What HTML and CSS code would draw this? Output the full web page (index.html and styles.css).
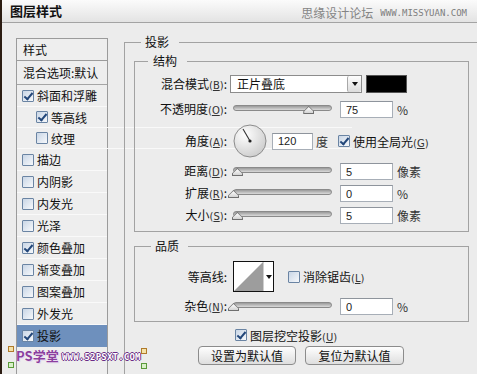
FILE: index.html
```html
<!DOCTYPE html>
<html lang="zh">
<head>
<meta charset="UTF-8">
<title>图层样式</title>
<link rel="stylesheet" href="styles.css">
</head>
<body>
<div class="titlebar">
  <span class="title">图层样式</span>
  <span class="site"><span class="site-cn">思缘设计论坛</span><span class="site-url">WWW.MISSYUAN.COM</span></span>
</div>

<div class="main">
  <div class="styles">
    <div class="styles-head">样式</div>
    <div class="styles-blend">混合选项:默认</div>
    <div class="item"><span class="cb on"></span>斜面和浮雕</div>
    <div class="item sub"><span class="cb on"></span>等高线</div>
    <div class="item sub"><span class="cb"></span>纹理</div>
    <div class="item"><span class="cb"></span>描边</div>
    <div class="item"><span class="cb"></span>内阴影</div>
    <div class="item"><span class="cb"></span>内发光</div>
    <div class="item"><span class="cb"></span>光泽</div>
    <div class="item"><span class="cb on"></span>颜色叠加</div>
    <div class="item"><span class="cb"></span>渐变叠加</div>
    <div class="item"><span class="cb"></span>图案叠加</div>
    <div class="item"><span class="cb"></span>外发光</div>
    <div class="item active"><span class="cb on"></span>投影</div>
  </div>

  <fieldset class="outer">
    <legend>投影</legend>

    <fieldset class="sub structure">
      <legend>结构</legend>
      <div class="row r-blend">
        <label class="lbl">混合模式<span class="key">(<u>B</u>)</span>:</label>
        <div class="select"><span class="select-text">正片叠底</span><span class="select-btn"></span></div>
        <span class="swatch"></span>
      </div>
      <div class="row r-opacity">
        <label class="lbl">不透明度<span class="key">(<u>O</u>)</span>:</label>
        <div class="slider"><span class="thumb" style="left:76%"></span></div>
        <input class="num" value="75">
        <span class="unit">%</span>
      </div>
      <div class="row r-angle">
        <label class="lbl">角度<span class="key">(<u>A</u>)</span>:</label>
        <svg class="dial" width="34" height="34" viewBox="0 0 34 34">
          <defs>
            <radialGradient id="dg" cx="35%" cy="30%" r="80%">
              <stop offset="0" stop-color="#ffffff"/>
              <stop offset="1" stop-color="#c9c9c9"/>
            </radialGradient>
          </defs>
          <circle cx="17" cy="17" r="16" fill="url(#dg)" stroke="#8c8c8c"/>
          <line x1="17" y1="17" x2="10" y2="5" stroke="#333" stroke-width="1.1"/>
          <circle cx="17" cy="17" r="1.6" fill="#222"/>
        </svg>
        <input class="num num-angle" value="120">
        <span class="unit unit-deg">度</span>
        <span class="cb on global"></span><span class="cb-text">使用全局光<span class="key">(<u>G</u>)</span></span>
      </div>
      <div class="row">
        <label class="lbl">距离<span class="key">(<u>D</u>)</span>:</label>
        <div class="slider"><span class="thumb" style="left:4%"></span></div>
        <input class="num" value="5">
        <span class="unit">像素</span>
      </div>
      <div class="row">
        <label class="lbl">扩展<span class="key">(<u>R</u>)</span>:</label>
        <div class="slider"><span class="thumb" style="left:0%"></span></div>
        <input class="num" value="0">
        <span class="unit">%</span>
      </div>
      <div class="row">
        <label class="lbl">大小<span class="key">(<u>S</u>)</span>:</label>
        <div class="slider"><span class="thumb" style="left:4%"></span></div>
        <input class="num" value="5">
        <span class="unit">像素</span>
      </div>
    </fieldset>

    <fieldset class="sub quality">
      <legend>品质</legend>
      <div class="row r-contour">
        <label class="lbl">等高线:</label>
        <div class="contour">
          <svg width="29" height="29" viewBox="0 0 29 29"><polygon points="0,29 29,0 29,29" fill="#9d9d9d"/></svg>
          <span class="contour-btn"></span>
        </div>
        <span class="cb aa"></span><span class="cb-text">消除锯齿<span class="key">(<u>L</u>)</span></span>
      </div>
      <div class="row r-noise">
        <label class="lbl">杂色<span class="key">(<u>N</u>)</span>:</label>
        <div class="slider"><span class="thumb" style="left:0%"></span></div>
        <input class="num" value="0">
        <span class="unit">%</span>
      </div>
    </fieldset>

    <div class="knockout"><span class="cb on"></span><span class="cb-text">图层挖空投影<span class="key">(<u>U</u>)</span></span></div>
    <div class="buttons">
      <button class="btn">设置为默认值</button>
      <button class="btn">复位为默认值</button>
    </div>
  </fieldset>
</div>

<div class="mark">
  <span class="corner c1"></span>
  <span class="corner c2"></span>
  <span class="mark-ps">PS学堂</span>
  <span class="mark-url">WWW.52PSXT.COM</span>
  <span class="corner c3"></span>
  <span class="corner c4"></span>
</div>
</body>
</html>
```

FILE: styles.css
```css
body {
  margin: 0;
  width: 477px;
  height: 374px;
  overflow: hidden;
  position: relative;
  box-sizing: border-box;
  border-left: 2px solid #2b1c12;
  background: #ececec;
  font-family: "Noto Sans CJK SC", sans-serif;
  font-size: 12px;
  color: #111;
}

/* title bar */
.titlebar {
  height: 22px;
  border-bottom: 1px solid #a3a3a3;
  background: linear-gradient(#fbfbfb, #e3e3e3);
  display: flex;
  align-items: center;
  justify-content: space-between;
  padding: 0 10px 0 8px;
}
.title {
  font-weight: bold;
  font-size: 13px;
  line-height: 16px;
}
.site {
  display: flex;
  align-items: center;
  margin-top: 3px;
  color: #858585;
}
.site-cn {
  font-size: 12px;
  line-height: 14px;
}
.site-url {
  font-family: "DejaVu Sans Mono", monospace;
  font-size: 9px;
  margin-left: 7px;
  color: #7d7d7d;
}

.main {
  display: flex;
  align-items: flex-start;
}

/* left style list */
.styles {
  flex: none;
  width: 92px;
  height: 336px;
  margin: 15px 0 0 14px;
  box-sizing: border-box;
  border: 1px solid #9b9b9b;
  border-bottom: none;
  background: #eeeeee;
}
.styles-head {
  height: 21px;
  line-height: 21px;
  padding-left: 6px;
  border-bottom: 1px solid #9b9b9b;
}
.styles-blend {
  height: 23px;
  line-height: 23px;
  padding-left: 6px;
  border-bottom: 1px solid #a5a5a5;
  white-space: nowrap;
}
.item {
  height: 21px;
  display: flex;
  align-items: center;
  padding-left: 5px;
  border-bottom: 1px solid #f9f9f9;
}
.item.sub {
  padding-left: 19px;
}
.item .cb {
  margin-right: 3px;
}
.item.active {
  background: #6e90bd;
  border-bottom-color: #6e90bd;
}

/* checkbox */
.cb {
  flex: none;
  width: 12px;
  height: 12px;
  box-sizing: border-box;
  border: 1px solid #6a84a3;
  border-radius: 1px;
  background: linear-gradient(135deg, #c9d6e6, #f6f8fb);
  position: relative;
}
.cb.on::after {
  content: "";
  position: absolute;
  left: 3px;
  top: 0px;
  width: 3px;
  height: 7px;
  border: solid #23477a;
  border-width: 0 2px 2px 0;
  transform: rotate(40deg);
}
.cb-text {
  margin-left: 3px;
  white-space: nowrap;
}

/* group boxes */
fieldset {
  margin: 0;
  border: 1px solid #a2a2a2;
  min-width: 0;
}
legend {
  line-height: 16px;
  font-size: 12px;
}
.outer {
  flex: none;
  width: 353px;
  height: 340px;
  margin: 11px 0 0 16px;
  padding: 0 0 0 9px;
  box-sizing: border-box;
  border-right: none;
  border-bottom: none;
}
.outer > legend {
  margin-left: 7px;
  padding: 0 10px 0 4px;
}
.sub {
  width: 335px;
  box-sizing: border-box;
  padding: 0;
}
.sub > legend {
  margin-left: 13px;
  padding: 0 10px 0 5px;
}
.structure {
  margin-top: 3px;
  padding-bottom: 7px;
}
.quality {
  margin-top: 6px;
  padding-bottom: 6px;
}
.quality > legend {
  margin-left: 16px;
  padding: 0 9px 0 4px;
}

/* rows */
.row {
  display: flex;
  align-items: center;
  height: 17px;
  margin-top: 5px;
}
.r-blend {
  height: 18px;
  margin-top: 6px;
}
.r-opacity {
  margin-top: 8px;
}
.r-angle {
  height: 34px;
  margin-top: 6px;
}
.r-contour {
  height: 31px;
  margin-top: 7px;
}
.r-noise {
  margin-top: 6px;
}
.lbl {
  flex: none;
  width: 92px;
  text-align: right;
  margin-right: 3px;
  white-space: nowrap;
  line-height: 17px;
}
.key {
  font-family: "DejaVu Sans", sans-serif;
  font-size: 10px;
  color: #333;
}
.key u {
  text-decoration-thickness: 1px;
}

/* controls */
.select {
  flex: none;
  width: 132px;
  height: 18px;
  box-sizing: border-box;
  border: 1px solid #8c8c8c;
  background: #fff;
  display: flex;
  align-items: center;
}
.select-text {
  flex: 1;
  padding-left: 6px;
  line-height: 16px;
}
.select-btn {
  width: 14px;
  height: 16px;
  box-sizing: border-box;
  border-left: 1px solid #a8a8a8;
  border-radius: 2px;
  background: linear-gradient(#fdfdfd, #dcdcdc);
  display: flex;
  align-items: center;
  justify-content: center;
}
.select-btn::after,
.contour-btn::after {
  content: "";
  border-left: 3px solid transparent;
  border-right: 3px solid transparent;
  border-top: 4px solid #111;
}
.swatch {
  flex: none;
  width: 41px;
  height: 18px;
  margin-left: 4px;
  box-sizing: border-box;
  border: 1px solid #555;
  background: #000;
}

.slider {
  flex: none;
  position: relative;
  width: 99px;
  height: 17px;
  margin-left: 3px;
}
.slider::before {
  content: "";
  position: absolute;
  left: 0;
  right: 0;
  top: 4px;
  height: 4px;
  border: 1px solid #8a8a8a;
  border-radius: 3px;
  background: linear-gradient(#9a9a9a, #dadada);
}
.thumb {
  position: absolute;
  top: 5px;
  width: 11px;
  height: 8px;
  margin-left: -5px;
  background: #6f6f6f;
  clip-path: polygon(0 100%, 0 70%, 50% 0, 100% 70%, 100% 100%);
}
.thumb::before {
  content: "";
  position: absolute;
  inset: 1px 1px 1px 1px;
  background: linear-gradient(#ffffff, #d4d4d4);
  clip-path: polygon(0 100%, 0 72%, 50% 0, 100% 72%, 100% 100%);
}

.num {
  flex: none;
  width: 53px;
  height: 17px;
  margin: 0 0 0 8px;
  padding: 0 0 0 5px;
  box-sizing: border-box;
  border: 1px solid #a7aeb7;
  border-top-color: #8e949c;
  background: #fff;
  font-family: "Liberation Sans", sans-serif;
  font-size: 11px;
  color: #222;
  outline: none;
}
.unit {
  margin-left: 4px;
  color: #333;
  line-height: 17px;
}
.dial {
  flex: none;
  margin-left: 3px;
}
.num-angle {
  width: 41px;
  margin-left: 5px;
}
.unit-deg {
  margin-left: 3px;
}
.global {
  margin-left: 10px;
}

.contour {
  flex: none;
  width: 41px;
  height: 31px;
  margin-left: 3px;
  box-sizing: border-box;
  border: 1px solid #111;
  background: #fff;
  display: flex;
}
.contour svg {
  display: block;
}
.contour-btn {
  flex: 1;
  display: flex;
  align-items: center;
  justify-content: center;
  border-left: 1px solid #cfcfcf;
}
.aa {
  margin-left: 14px;
}

.knockout {
  display: flex;
  align-items: center;
  height: 16px;
  margin: 5px 0 0 101px;
}
.buttons {
  display: flex;
  gap: 9px;
  margin: 3px 0 0 64px;
}
.btn {
  height: 19px;
  width: 98px;
  padding: 0;
  border: 1px solid #8c8c8c;
  border-radius: 4px;
  background: linear-gradient(#fefefe, #dedede);
  font-family: "Noto Sans CJK SC", sans-serif;
  font-size: 12px;
  line-height: 17px;
  color: #111;
}
.btn + .btn {
  width: 99px;
}

/* watermark over the list */
.mark {
  position: absolute;
  left: 3px;
  top: 344px;
  width: 140px;
  height: 26px;
}
.mark-ps {
  position: absolute;
  left: 11px;
  top: 3px;
  font-size: 13px;
  font-weight: bold;
  line-height: 18px;
  color: #8b3f9e;
  text-shadow: 0 0 1px #fff, 1px 1px 0 #e6d4ee;
}
.mark-url {
  position: absolute;
  left: 57px;
  top: 8px;
  font-family: "DejaVu Sans Mono", monospace;
  font-size: 9px;
  font-weight: bold;
  letter-spacing: 0.2px;
  color: #fff;
  text-shadow: 1px 0 0 #6b2c86, -1px 0 0 #6b2c86, 0 1px 0 #6b2c86, 0 -1px 0 #6b2c86;
}
.corner {
  position: absolute;
  width: 4px;
  height: 4px;
  border: 1px solid #b07a2a;
  background: #f4e2a8;
}
.c1 { left: 3px; top: 2px; }
.c2 { left: 3px; top: 18px; border-color: #5a9a3a; background: #d8f0c8; }
.c3 { left: 136px; top: 4px; }
.c4 { left: 136px; top: 19px; border-color: #5a9a3a; background: #d8f0c8; }
```
